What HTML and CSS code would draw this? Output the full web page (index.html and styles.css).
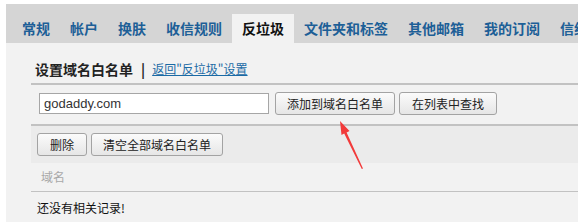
FILE: index.html
```html
<!DOCTYPE html>
<html lang="zh-CN">
<head>
<meta charset="utf-8">
<title>设置域名白名单</title>
<link rel="stylesheet" href="styles.css">
</head>
<body>
<div class="page">
  <nav class="tabs">
    <span class="tab">常规</span>
    <span class="tab">帐户</span>
    <span class="tab">换肤</span>
    <span class="tab">收信规则</span>
    <span class="tab active">反垃圾</span>
    <span class="tab">文件夹和标签</span>
    <span class="tab">其他邮箱</span>
    <span class="tab">我的订阅</span>
    <span class="tab">信纸</span>
  </nav>
  <main class="content">
    <div class="heading">
      <span class="title">设置域名白名单</span>
      <span class="sep">|</span>
      <a class="back" href="#">返回"反垃圾"设置</a>
    </div>
    <div class="form-row">
      <input class="domain" type="text" value="godaddy.com">
      <button class="btn btn-add">添加到域名白名单</button>
      <button class="btn btn-find">在列表中查找</button>
    </div>
    <div class="toolbar">
      <button class="btn btn-del">删除</button>
      <button class="btn btn-clear">清空全部域名白名单</button>
    </div>
    <div class="th-row">域名</div>
    <div class="empty">还没有相关记录!</div>
  </main>
  <svg class="arrow" width="578" height="222" viewBox="0 0 578 222" aria-hidden="true">
    <polygon points="340,121 349.5,131 346.6,132.5 363,168.5 361.8,169 344.2,133.6 341.5,135" fill="#f23a3a"/>
  </svg>
</div>
</body>
</html>
```
FILE: styles.css
```css
* { box-sizing: border-box; }
html, body { margin: 0; padding: 0; background: #fff; }
body {
  font-family: "Noto Sans CJK SC", "Microsoft YaHei", sans-serif;
  font-size: 12px;
  color: #222;
  width: 578px;
  height: 222px;
  overflow: hidden;
}
.page {
  position: relative;
  padding: 4px 0 0 6px;
  height: 222px;
}
.tabs {
  display: flex;
  align-items: flex-end;
  height: 39px;
  background: #d5d5d5;
  padding-left: 6px;
  white-space: nowrap;
  overflow: hidden;
}
.tab {
  flex: none;
  height: 29px;
  line-height: 29px;
  padding: 0 10px;
  font-size: 14px;
  font-weight: bold;
  color: #1d5f97;
}
.tab.active {
  background: #f2f2f2;
  color: #111;
}
.content {
  background: #f2f2f2;
  height: 179px;
  padding-left: 25px;
}
.heading {
  height: 42px;
  padding: 14px 0 0 4px;
  line-height: 24px;
  border-bottom: 2px solid #c2c2c2;
  display: flex;
  align-items: flex-start;
  white-space: nowrap;
}
.title {
  font-size: 14px;
  font-weight: bold;
  color: #222;
}
.sep {
  margin: 0 7px 0 8px;
  font-size: 14px;
  font-weight: bold;
  color: #222;
}
.back {
  font-size: 12px;
  color: #1a6aa5;
  text-decoration: underline;
}
.form-row {
  height: 41px;
  border-bottom: 2px solid #c2c2c2;
  display: flex;
  align-items: center;
  padding: 0 0 2px 8px;
}
.domain {
  width: 230px;
  height: 21px;
  margin: 0 6px 0 0;
  padding: 0 4px;
  border: 1px solid #a6a6a6;
  background: #fff;
  font-family: "Liberation Sans", Arial, sans-serif;
  font-size: 13px;
  color: #333;
  outline: none;
}
.btn {
  height: 23px;
  margin: 0 4px 0 0;
  padding: 0 11px;
  border: 1px solid #a3a3a3;
  border-radius: 3px;
  background: linear-gradient(#fbfbfb, #e6e6e6);
  font-family: "Noto Sans CJK SC", sans-serif;
  font-size: 12px;
  line-height: 21px;
  color: #222;
}
.btn-add { width: 120px; padding: 0; }
.btn-find { width: 98px; padding: 0; }
.btn-del { width: 50px; padding: 0; }
.btn-clear { width: 132px; padding: 0; }
.toolbar {
  height: 37px;
  background: #ebebeb;
  display: flex;
  align-items: center;
  padding-left: 6px;
}
.th-row {
  height: 29px;
  border-bottom: 1px solid #c2c2c2;
  padding-left: 10px;
  line-height: 28px;
  color: #a8a8a8;
}
.empty {
  padding-left: 6px;
  line-height: 32px;
  color: #111;
}
.arrow {
  position: absolute;
  left: 0;
  top: 0;
  pointer-events: none;
}
```
